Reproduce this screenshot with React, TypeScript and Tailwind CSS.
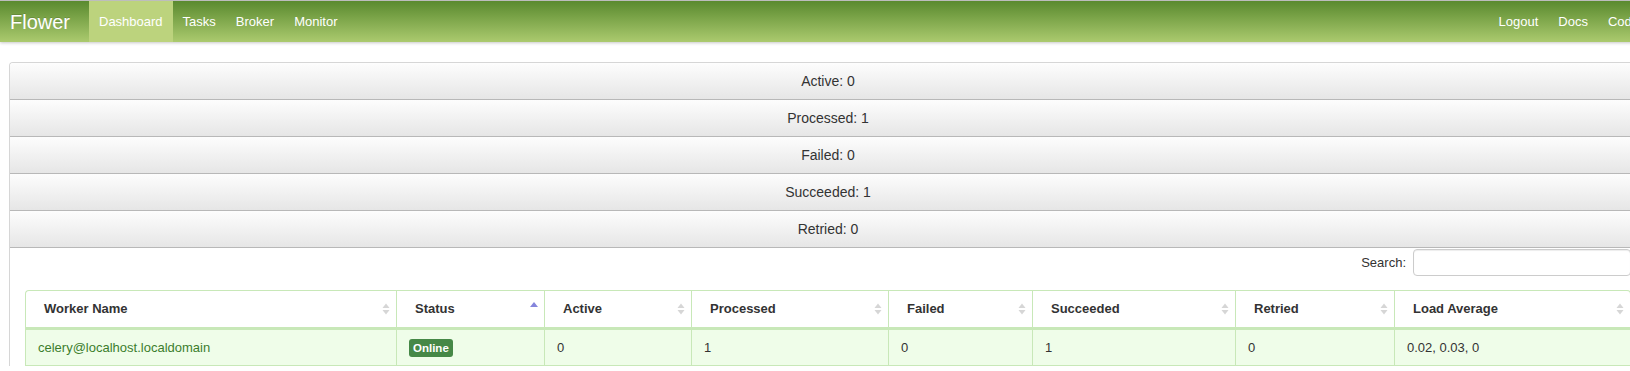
import React from "react";

const cols = [
  { name: "Worker Name", w: "w-[371px]" },
  { name: "Status", w: "w-[148px]", sorted: true },
  { name: "Active", w: "w-[147px]" },
  { name: "Processed", w: "w-[197px]" },
  { name: "Failed", w: "w-[144px]" },
  { name: "Succeeded", w: "w-[203px]" },
  { name: "Retried", w: "w-[159px]" },
  { name: "Load Average", w: "w-[237px]" },
];

function SortIcon({ sorted }: { sorted?: boolean }) {
  if (sorted) {
    return (
      <svg width="8" height="14" viewBox="0 0 8 14" className="absolute right-[6px] top-1/2 -translate-y-1/2 -mt-[1px]">
        <polygon points="0,6 4,1 8,6" fill="#8585dc" />
      </svg>
    );
  }
  return (
    <svg width="8" height="14" viewBox="0 0 8 14" className="absolute right-[6px] top-1/2 -translate-y-1/2">
      <polygon points="0.5,6 4,1.5 7.5,6" fill="#d6d6d6" />
      <polygon points="0.5,8 4,12.5 7.5,8" fill="#d6d6d6" />
    </svg>
  );
}

const stats = ["Active: 0", "Processed: 1", "Failed: 0", "Succeeded: 1", "Retried: 0"];

export default function App() {
  const body: React.ReactNode[] = [
    <span className="text-[#3c7d2d]">celery@localhost.localdomain</span>,
    <span className="inline-block bg-[#468847] text-white font-bold text-[11.5px] leading-[14px] px-[4px] py-[2px] rounded-[3px]">Online</span>,
    "0",
    "1",
    "0",
    "1",
    "0",
    "0.02, 0.03, 0",
  ];
  return (
    <div className="w-[1630px] h-[371px] overflow-hidden bg-white font-['Liberation_Sans',Arial,sans-serif] text-[#333]">
      <div className="w-[1680px]">
        {/* Navbar */}
        <div className="relative h-[42px] border-t border-[#bdbdbd] bg-[linear-gradient(to_bottom,#5a8a2f,#abca6e)] shadow-[0_1px_3px_rgba(0,0,0,0.22)] flex items-stretch pl-[10px] pr-[31px]">
          <div className="w-[79px] flex items-center text-[20px] text-white [text-shadow:0_-1px_0_rgba(0,0,0,0.15)]">Flower</div>
          <div className="flex items-stretch text-[13px] text-white">
            <div className="px-[10px] flex items-center bg-[#bcd37d]">Dashboard</div>
            <div className="px-[10px] flex items-center">Tasks</div>
            <div className="px-[10px] flex items-center">Broker</div>
            <div className="px-[10px] flex items-center">Monitor</div>
          </div>
          <div className="ml-auto flex items-stretch text-[13px] text-white">
            <div className="px-[10px] flex items-center">Logout</div>
            <div className="px-[10px] flex items-center">Docs</div>
            <div className="px-[10px] flex items-center">Code</div>
          </div>
        </div>

        {/* Panel */}
        <div className="mt-[20px] ml-[9px] w-[1637px] border-l border-t border-[#d6d6d6] rounded-tl-[4px] overflow-hidden">
          {stats.map((s) => (
            <div
              key={s}
              className="h-[37px] border-b border-[#b8b8b8] bg-[linear-gradient(to_bottom,#fdfdfd,#e6e6e6)] flex items-center justify-center text-[14px] text-[#333]"
            >
              {s}
            </div>
          ))}
          <div className="px-[15px]">
            <div className="mt-[1px] h-[27px] flex justify-end items-center gap-[7px]">
              <span className="text-[13px] text-[#333]">Search:</span>
              <div className="w-[218px] h-[27px] border border-[#cccccc] rounded-[4px] bg-white shadow-[inset_0_1px_1px_rgba(0,0,0,0.075)]" />
            </div>
            <div className="mt-[14px] w-[1606px]">
              <div className="flex">
                {cols.map((c, i) => (
                  <div
                    key={c.name}
                    className={`${c.w} relative h-[40px] border-t border-l border-b-[3px] border-[#c8e8b8] bg-white flex items-center pl-[18px] text-[13px] font-bold text-[#333] ${i === 0 ? "rounded-tl-[4px]" : ""} ${i === cols.length - 1 ? "border-r rounded-tr-[4px]" : ""}`}
                  >
                    {c.name}
                    <SortIcon sorted={c.sorted} />
                  </div>
                ))}
              </div>
              <div className="flex">
                {cols.map((c, i) => (
                  <div
                    key={c.name}
                    className={`${c.w} h-[36px] border-l border-b border-[#c8e8b8] bg-[#effde9] flex items-center pl-[12px] text-[13px] text-[#333] ${i === cols.length - 1 ? "border-r" : ""}`}
                  >
                    {body[i]}
                  </div>
                ))}
              </div>
            </div>
          </div>
        </div>
      </div>
    </div>
  );
}
